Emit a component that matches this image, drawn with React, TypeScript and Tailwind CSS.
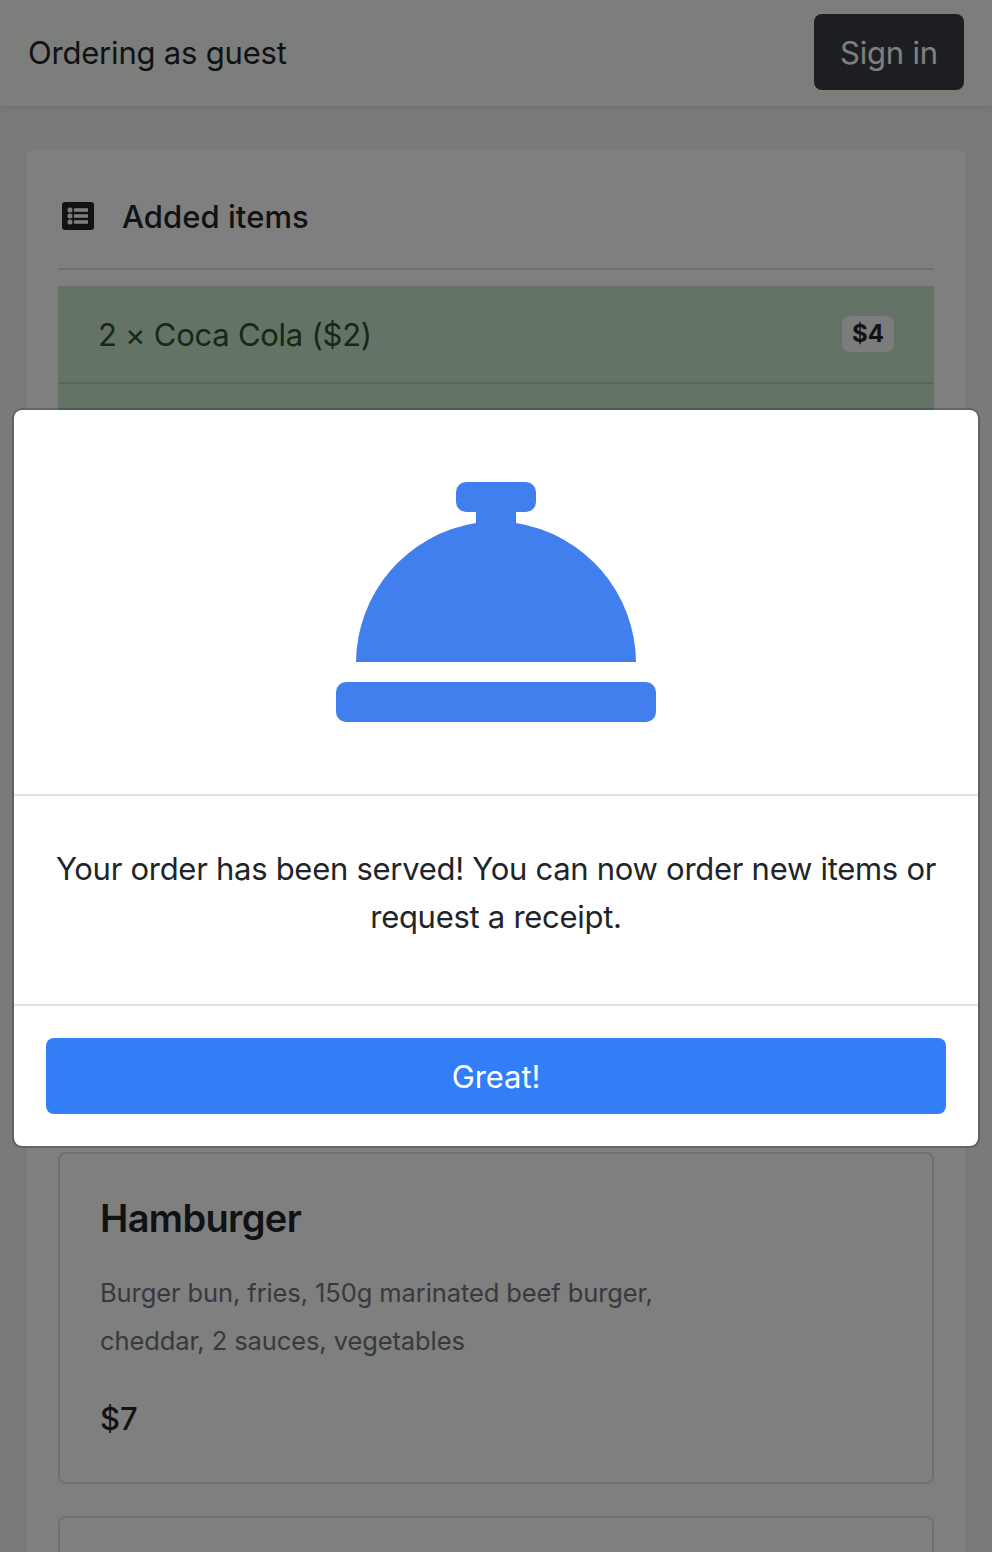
import React from "react";

function ListIcon() {
  return (
    <svg className="block h-7 w-8" viewBox="0 0 32 28" fill="none">
      <rect width="32" height="28" rx="3" fill="#212529" />
      <g fill="#ffffff">
        <circle cx="8" cy="8" r="2.5" />
        <circle cx="8" cy="14" r="2.5" />
        <circle cx="8" cy="20" r="2.5" />
        <rect x="12" y="6.2" width="14" height="3.6" rx="0.4" />
        <rect x="12" y="12.2" width="14" height="3.6" rx="0.4" />
        <rect x="12" y="18.2" width="14" height="3.6" rx="0.4" />
      </g>
    </svg>
  );
}

function ServiceBell() {
  return (
    <svg className="block h-60 w-80" viewBox="0 0 320 240" fill="#417fee">
      <rect x="120" width="80" height="30" rx="10" />
      <rect x="140" y="20" width="40" height="40" />
      <path d="M20 180A142 142 0 0 1 140 41H180A142 142 0 0 1 300 180Z" />
      <rect y="200" width="320" height="40" rx="10" />
    </svg>
  );
}

function TopBar() {
  return (
    <header className="relative flex h-[106px] shrink-0 items-center justify-between bg-[#f8fcf9] px-7 pb-0.5 shadow-[0_4px_8px_rgba(0,0,0,0.08)]">
      <span className="pt-0.5 text-[31px] leading-12 tracking-[-0.2px]">Ordering as guest</span>
      <button className="h-[76px] w-[150px] rounded-lg bg-[#3a3c42] pt-0.5 text-[31px] leading-12 tracking-[-0.2px] text-white">
        Sign in
      </button>
    </header>
  );
}

function AddedItems() {
  return (
    <section>
      <div className="flex h-[88px] items-center gap-7 border-b-2 border-[#dfdfdf] pb-[18px] pl-1">
        <ListIcon />
        <h2 className="pt-0.5 text-[31px] leading-12 font-medium tracking-[0.05px]">Added items</h2>
      </div>
      <ul className="mt-4 bg-[#cbe6ce] text-[#2a5528]">
        <li className="flex h-[98px] items-center justify-between border-b-2 border-[#b4ccba] px-10">
          <span className="pt-0.5 text-[31px] leading-12 tracking-[-0.26px]">2 × Coca Cola ($2)</span>
          <span className="flex h-9 w-[52px] items-center justify-center rounded-lg bg-[#f8f9fa] text-[24px] font-bold text-[#212529]">
            $4
          </span>
        </li>
        <li className="h-24" />
      </ul>
    </section>
  );
}

function MenuItem() {
  return (
    <article className="h-[332px] rounded-lg border-2 border-[#dfdfdf] px-10 pt-10">
      <h3 className="text-[38px] leading-12 font-semibold tracking-[-0.65px]">Hamburger</h3>
      <p className="mt-[27px] w-[600px] text-[25.5px] leading-12 tracking-[-0.1px] text-[#6c757d]">
        Burger bun, fries, 150g marinated beef burger,
        <br />
        cheddar, 2 sauces, vegetables
      </p>
      <p className="mt-[30px] text-[31px] leading-12 font-medium">$7</p>
    </article>
  );
}

function ServedDialog() {
  return (
    <div className="absolute inset-0 bg-black/50 px-3 pt-[408px]">
      <div
        role="dialog"
        className="flex h-[740px] flex-col overflow-hidden rounded-[10px] border-2 border-black/20 bg-white bg-clip-padding"
      >
        <div className="flex h-[386px] justify-center border-b-2 border-[#dee2e6] pt-[72px]">
          <ServiceBell />
        </div>
        <div className="h-[210px] border-b-2 border-[#dee2e6] pt-[49px] text-center text-[31px] leading-12 tracking-[-0.28px]">
          Your order has been served! You can now order new items or
          <br />
          request a receipt.
        </div>
        <div className="p-8">
          <button className="h-[76px] w-full rounded-lg bg-[#317ef7] pt-0.5 text-[31px] leading-12 tracking-[-0.1px] text-white">
            Great!
          </button>
        </div>
      </div>
    </div>
  );
}

export default function App() {
  return (
    <div className="relative flex h-[1552px] flex-col overflow-hidden bg-[#f4f5f9] font-['Inter',sans-serif] font-[430] text-[#212529]">
      <TopBar />
      <main className="mx-[26px] mt-11 flex h-[1500px] shrink-0 flex-col rounded-lg bg-white px-8 pt-8 shadow-[0_4px_8px_rgba(0,0,0,0.05)]">
        <AddedItems />
        <section className="mt-[672px] flex flex-col gap-8">
          <MenuItem />
          <article className="h-[332px] rounded-lg border-2 border-[#dfdfdf]" />
        </section>
      </main>
      <ServedDialog />
    </div>
  );
}
